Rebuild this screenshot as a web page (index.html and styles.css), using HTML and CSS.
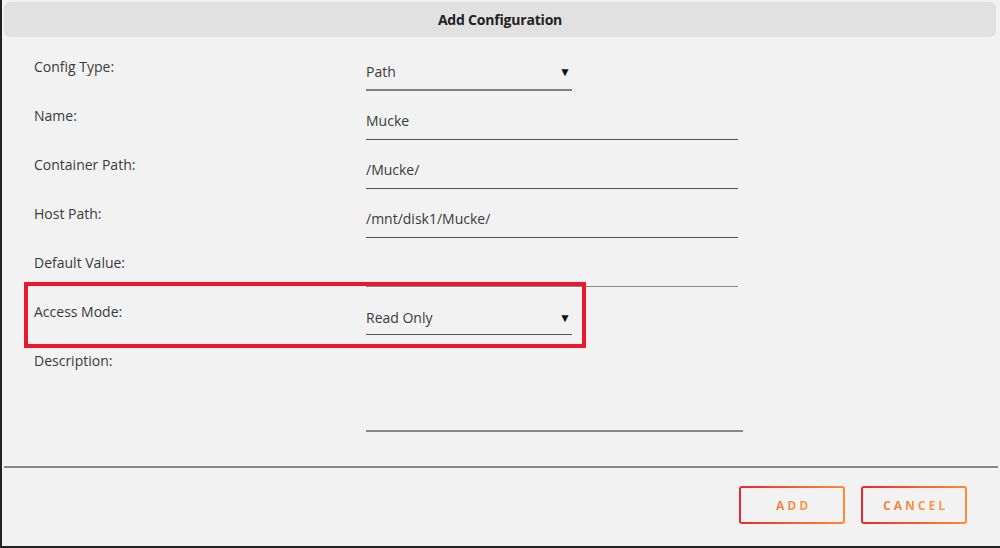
FILE: index.html
```html
<!DOCTYPE html>
<html lang="en">
<head>
  <meta charset="UTF-8" />
  <meta name="viewport" content="width=device-width, initial-scale=1.0"/>
  <title>Add Configuration</title>
  <link rel="stylesheet" href="styles.css">
</head>
<body>
  <div class="dialog">
    <div class="title-bar">Add Configuration</div>

    <div class="form">
      <div class="row">
        <label>Config Type:</label>
        <div class="field select short">
          <span>Path</span>
          <span class="arrow">&#9660;</span>
        </div>
      </div>
      <div class="row">
        <label>Name:</label>
        <div class="field">Mucke</div>
      </div>
      <div class="row">
        <label>Container Path:</label>
        <div class="field">/Mucke/</div>
      </div>
      <div class="row">
        <label>Host Path:</label>
        <div class="field">/mnt/disk1/Mucke/</div>
      </div>
      <div class="row">
        <label>Default Value:</label>
        <div class="field light"></div>
      </div>
      <div class="row">
        <label>Access Mode:</label>
        <div class="field select dark short">
          <span>Read Only</span>
          <span class="arrow">&#9660;</span>
        </div>
        <div class="highlight"></div>
      </div>
      <div class="row">
        <label>Description:</label>
        <div class="field textarea"></div>
      </div>
    </div>

    <div class="footer">
      <button class="btn"><span>ADD</span></button>
      <button class="btn"><span>CANCEL</span></button>
    </div>
  </div>
</body>
</html>
```

FILE: styles.css
```css
html, body {
  margin: 0;
  height: 100%;
}

body {
  font-family: 'Open Sans', 'Liberation Sans', sans-serif;
  background-color: #f2f2f2;
  color: #3a3a3a;
}

.dialog {
  height: 548px;
  box-sizing: border-box;
  border-left: 2px solid #222;
  border-bottom: 2px solid #222;
  display: flex;
  flex-direction: column;
}

.title-bar {
  margin: 2px 4px 0 2px;
  height: 35px;
  line-height: 35px;
  background-color: #e1e1e1;
  border-radius: 6px;
  text-align: center;
  font-size: 14px;
  font-weight: bold;
  color: #222;
  letter-spacing: -0.2px;
}

.form {
  padding: 20px 0 0 32px;
  height: 429px;
  box-sizing: border-box;
}

.row {
  display: grid;
  grid-template-columns: 332px auto;
  height: 49px;
  position: relative;
}

.row label {
  font-size: 14px;
  line-height: 20px;
}

.field {
  margin-top: 5px;
  width: 372px;
  height: 20px;
  line-height: 20px;
  padding-bottom: 8px;
  font-size: 14px;
  border-bottom: 1px solid #555;
  justify-self: start;
}

.field.light {
  border-bottom-color: #8a8a8a;
}

.field.select {
  display: flex;
  justify-content: space-between;
  border-bottom: 2px solid #808080;
  padding-bottom: 7px;
}

.field.select.dark {
  border-bottom: 1px solid #555;
  padding-bottom: 6px;
  margin-top: 6px;
}

.field.short {
  width: 206px;
}

.arrow {
  font-size: 12px;
  color: #111;
  padding-right: 1px;
}

.field.textarea {
  width: 377px;
  height: 66px;
  padding-bottom: 8px;
  border-bottom: 2px solid #888;
}

.highlight {
  position: absolute;
  left: -10px;
  top: -20px;
  width: 554px;
  height: 58px;
  border: 4px solid #e8192c;
}

.footer {
  margin: 0 2px 0 2px;
  border-top: 2px solid #888;
  display: flex;
  justify-content: flex-end;
  gap: 16px;
  padding: 18px 31px 0 0;
}

.btn {
  width: 106px;
  height: 38px;
  border: 2px solid transparent;
  border-radius: 3px;
  background: linear-gradient(#f2f2f2, #f2f2f2) padding-box,
              linear-gradient(90deg, #e52a2f, #ff8b33) border-box;
  font-family: 'Open Sans', 'Liberation Sans', sans-serif;
  font-size: 12px;
  font-weight: bold;
  letter-spacing: 3px;
  cursor: pointer;
}

.btn span {
  background: linear-gradient(90deg, #f27a3a, #ff9a45);
  -webkit-background-clip: text;
  background-clip: text;
  color: transparent;
  padding-left: 3px;
}
```
